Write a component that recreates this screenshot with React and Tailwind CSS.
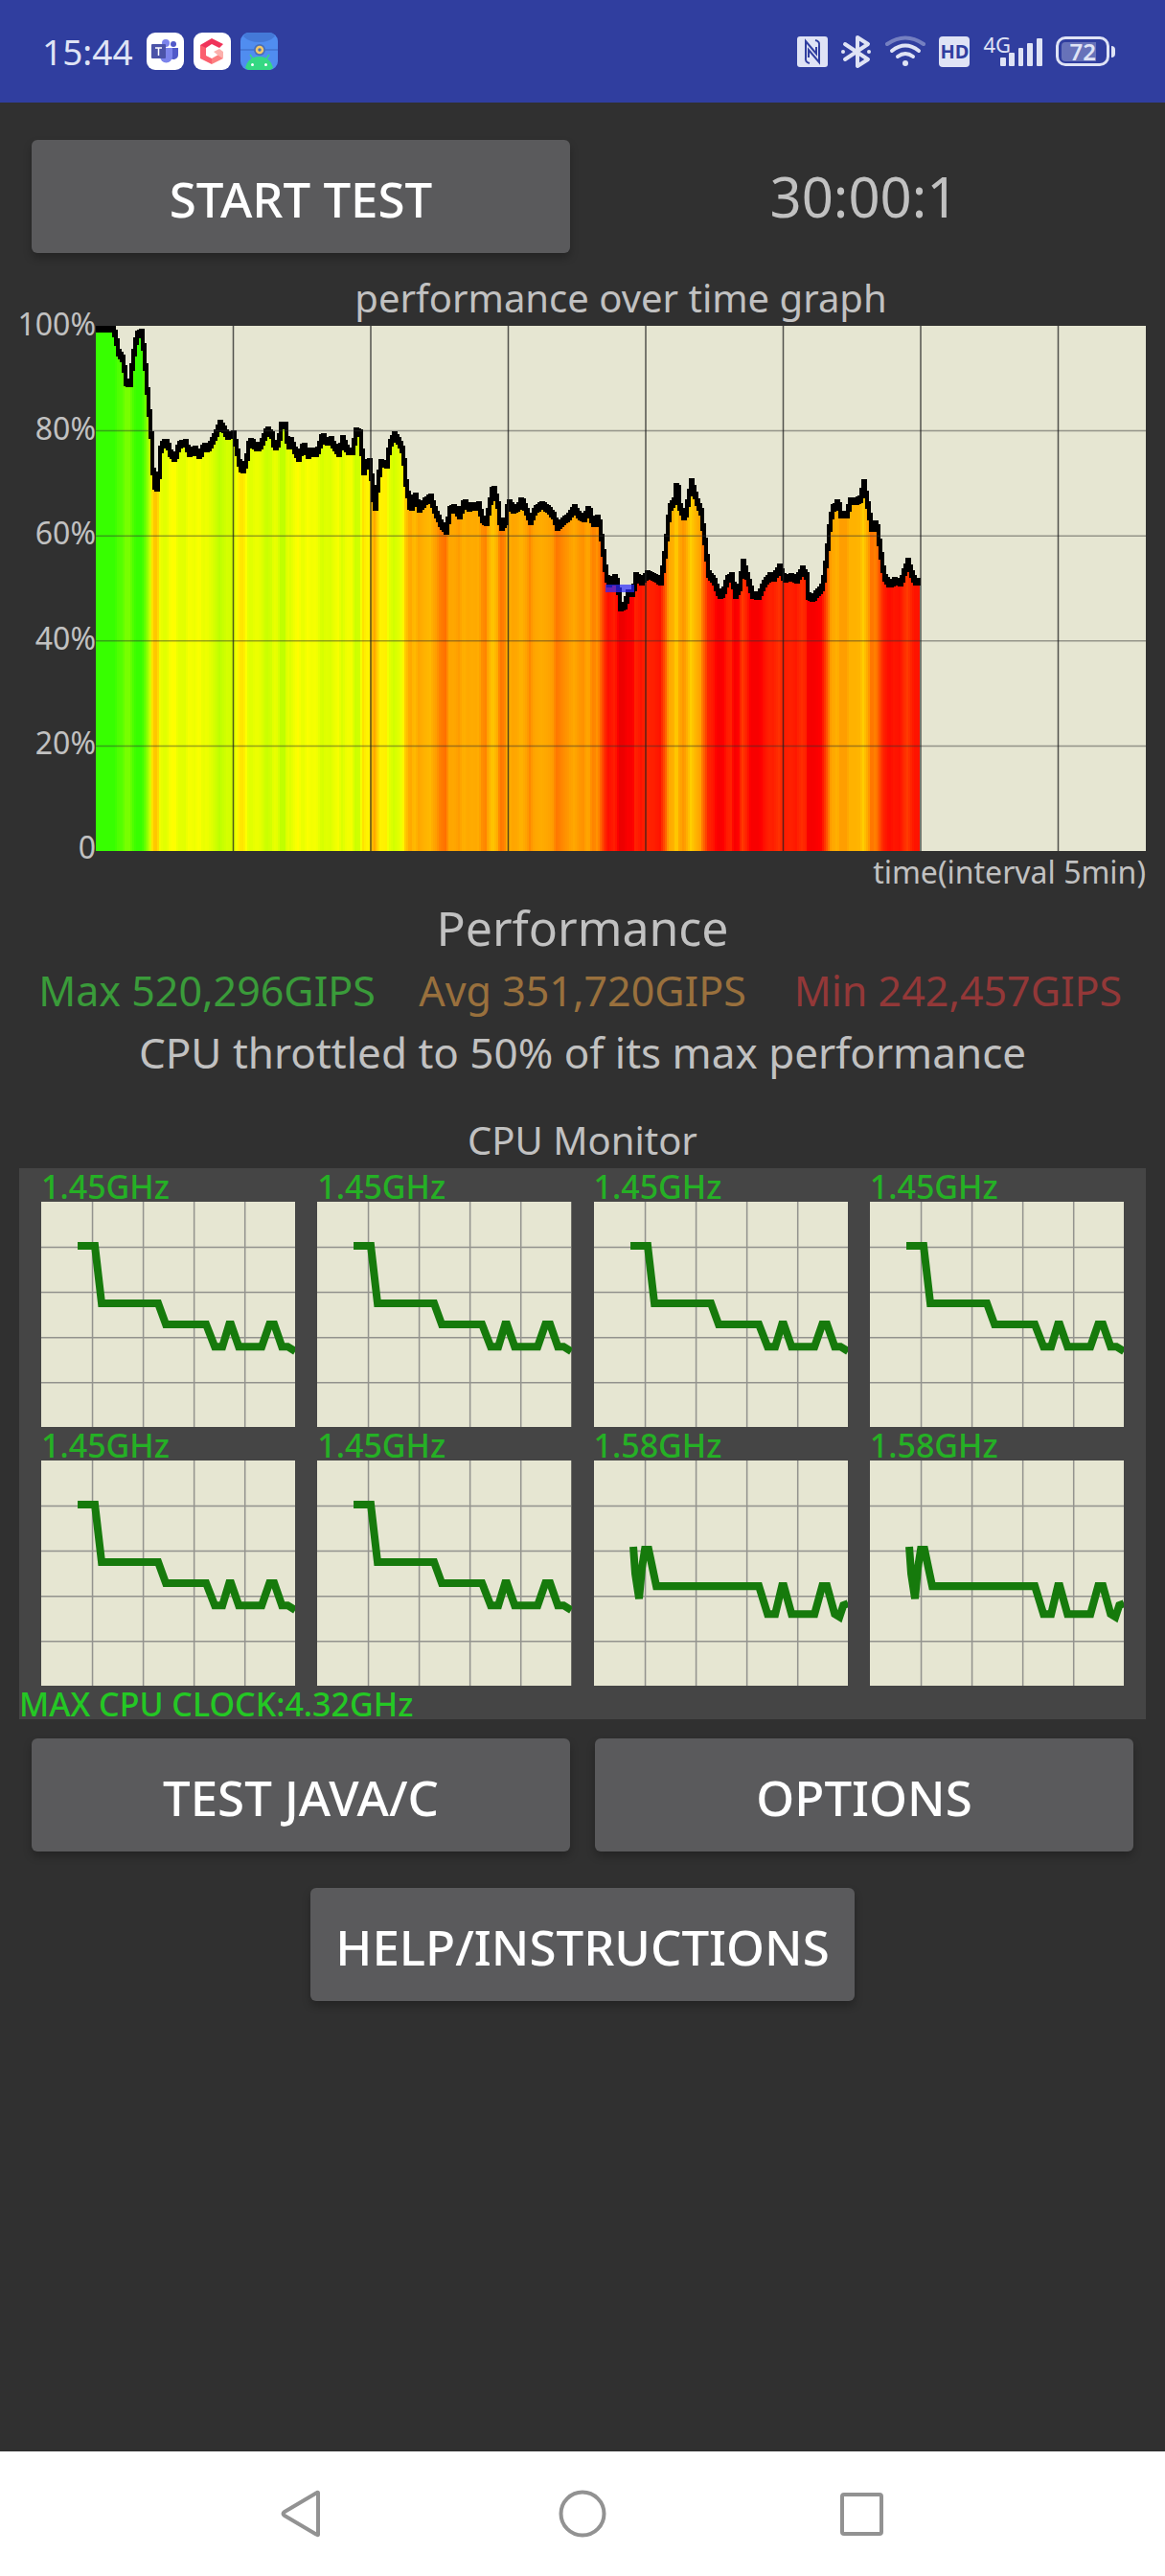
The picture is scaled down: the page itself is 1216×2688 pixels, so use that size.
import React from 'react';

// performance trace, [x, y] in plot units (y grows downwards, 548 = 0%)
const PLOT_W = 1096;
const PLOT_H = 548;
const TRACE = [
  [0, 3], [18, 3], [22, 22], [24, 34], [26, 28], [29, 45], [31, 59], [35, 60],
  [37, 43], [40, 20], [43, 9], [47, 7], [50, 30], [53, 68], [57, 114],
  [59, 152], [62, 175], [65, 156], [67, 129], [70, 122], [74, 122], [77, 133],
  [82, 139], [86, 124], [93, 122], [97, 133], [103, 129], [108, 136],
  [112, 125], [116, 129], [120, 122], [124, 114], [129, 102], [134, 110],
  [137, 115], [143, 113], [146, 126], [149, 143], [152, 152], [156, 143],
  [159, 124], [162, 120], [166, 127], [170, 127], [173, 121], [178, 108],
  [183, 114], [186, 127], [190, 122], [193, 104], [197, 104], [200, 127],
  [203, 120], [207, 130], [211, 138], [216, 124], [221, 135], [225, 131],
  [230, 133], [233, 124], [236, 114], [240, 122], [245, 119], [248, 126],
  [253, 133], [257, 118], [262, 131], [267, 131], [271, 110], [275, 112],
  [279, 152], [282, 143], [286, 141], [288, 175], [291, 189], [294, 160],
  [297, 143], [303, 145], [306, 124], [311, 114], [316, 122], [320, 131],
  [323, 164], [328, 194], [332, 175], [337, 191], [343, 183], [349, 179],
  [353, 192], [359, 206], [365, 214], [369, 192], [374, 190], [379, 198],
  [384, 183], [388, 190], [394, 187], [396, 190], [399, 187], [403, 202],
  [407, 205], [411, 183], [414, 167], [419, 187], [422, 212], [427, 204],
  [430, 183], [435, 192], [440, 190], [444, 181], [448, 191], [453, 204],
  [458, 192], [465, 187], [472, 192], [477, 198], [481, 210], [487, 204],
  [493, 199], [499, 190], [504, 199], [509, 201], [514, 190], [518, 206],
  [522, 204], [524, 198], [528, 229], [532, 261], [535, 269], [541, 263],
  [544, 269], [547, 294], [551, 292], [555, 279], [560, 279], [563, 261],
  [569, 267], [575, 259], [583, 263], [589, 267], [592, 248], [595, 221],
  [598, 191], [603, 183], [605, 168], [607, 170], [609, 189], [614, 202],
  [618, 179], [621, 163], [626, 181], [631, 194], [635, 225], [639, 259],
  [645, 267], [650, 281], [654, 279], [658, 265], [663, 261], [667, 281],
  [671, 273], [675, 247], [680, 265], [685, 281], [691, 282], [697, 269],
  [703, 261], [707, 263], [713, 252], [718, 264], [725, 262], [731, 265],
  [737, 254], [741, 261], [743, 282], [748, 284], [753, 278], [758, 272],
  [762, 241], [765, 211], [768, 191], [771, 189], [774, 183], [777, 197],
  [783, 197], [787, 183], [792, 183], [797, 181], [801, 164], [805, 187],
  [809, 211], [812, 211], [814, 203], [818, 233], [822, 261], [828, 270],
  [833, 266], [840, 268], [843, 257], [847, 246], [851, 259], [854, 267],
  [860, 267],
];

// performance % -> hue
const HUES = [
  [0, 0], [50, 0], [52, 7], [62, 29], [64, 37], [71, 50], [75, 60], [77, 65],
  [82, 77], [88, 90], [98, 107], [100, 107],
];

function lerp(table, x) {
  for (let i = 1; i < table.length; i++) {
    const [x0, y0] = table[i - 1];
    const [x1, y1] = table[i];
    if (x <= x1) return y0 + ((y1 - y0) * (x - x0)) / (x1 - x0);
  }
  return table[table.length - 1][1];
}

const BARS = Array.from({ length: 430 }, (_, i) => {
  const x = i * 2;
  const y = lerp(TRACE, x + 1);
  const prev = lerp(TRACE, Math.max(x - 1, 0));
  const pct = 100 - (y / PLOT_H) * 100;
  const light = pct < 50 ? 50 - (50 - pct) : 50;
  const top = Math.max(Math.min(y, prev) - 4, 0);
  return {
    x,
    y,
    top,
    line: Math.max(y, prev) + 4 - top,
    fill: `hsl(${lerp(HUES, pct)} 100% ${light}%)`,
  };
});

const LITTLE =
  'M38 46H56L63 106H122L130 128H172L181 151H189L196 128H198L206 151H230L238 128H243L251 151H257L265 156';
const BIG =
  'M41 90L43 118L47 144L50 112L53 93H57L65 131H172L181 160H189L196 131H198L206 160H230L238 131H243L251 160L256 163L260 151L265 149';

const CORES = [
  { clock: '1.45GHz', path: LITTLE },
  { clock: '1.45GHz', path: LITTLE },
  { clock: '1.45GHz', path: LITTLE },
  { clock: '1.45GHz', path: LITTLE },
  { clock: '1.45GHz', path: LITTLE },
  { clock: '1.45GHz', path: LITTLE },
  { clock: '1.58GHz', path: BIG },
  { clock: '1.58GHz', path: BIG },
];

function TeamsIcon() {
  return (
    <svg width="39" height="39" viewBox="0 0 39 39">
      <rect width="39" height="39" rx="9" fill="#fff" />
      <circle cx="28" cy="12" r="3" fill="#5059c9" />
      <path d="M24 16h9v7a5 5 0 0 1-9 3z" fill="#5059c9" />
      <circle cx="20" cy="11" r="4" fill="#7b83eb" />
      <path d="M14 16h13v9a6.500 6.500 0 0 1-13 0z" fill="#7b83eb" />
      <rect x="5" y="12" width="15" height="15" rx="1" fill="#4b53a8" />
      <path d="M9 16h7M12.500 16v8" stroke="#fff" strokeWidth="1.500" />
    </svg>
  );
}

function HexIcon() {
  return (
    <svg width="39" height="39" viewBox="0 0 39 39">
      <rect width="39" height="39" rx="9" fill="#fff" />
      <path d="M7 13L19 6L31 12L27 16L19 12L13 16V18L7 14z" fill="#f0335a" />
      <path d="M7 13L13 16V24L19 27V33L7 27z" fill="#fb5f6e" />
      <path d="M19 27L26 23L31 27L19 33z" fill="#fc7f80" />
      <path d="M21 20L27 17L31 20V27L26 24z" fill="#fbb0ac" />
    </svg>
  );
}

function DroidIcon() {
  return (
    <svg width="39" height="39" viewBox="0 0 39 39">
      <rect width="39" height="39" rx="9" fill="#508df0" />
      <path d="M3 4Q5 0 9 0H30Q34 0 36 4Q30 10 19.500 10T3 4z" fill="#4479d8" />
      <path d="M0 18H39" stroke="#4479d8" strokeWidth="2" />
      <circle cx="20" cy="18" r="6" fill="#4a6fb5" />
      <circle cx="20" cy="18" r="3" fill="none" stroke="#f3c969" strokeWidth="2.500" />
      <path d="M10 23L14 29M30 23L26 29" stroke="#35d883" strokeWidth="1.500" />
      <path d="M5 37Q8 25 19.500 25T34 37L31 39H8z" fill="#35d883" />
      <circle cx="12.500" cy="33.500" r="1.500" fill="#fff" />
      <circle cx="26.500" cy="33.500" r="1.500" fill="#fff" />
    </svg>
  );
}

function StatusBar() {
  return (
    <header className="flex h-[107px] items-center justify-between bg-[#303e9f] pr-[52px] pl-[44px] text-[#dfe3f5]">
      <div className="flex items-center gap-[10px]">
        <span className="pr-1 text-[37px] leading-10">15:44</span>
        <TeamsIcon />
        <HexIcon />
        <DroidIcon />
      </div>
      <div className="flex items-center gap-[14px]">
        <svg width="32" height="32" viewBox="0 0 32 32">
          <rect width="32" height="32" rx="3" fill="#dfe3f5" />
          <path
            d="M13 28Q8 27 9 22V5L20 18V11M19 4Q24 5 23 10V27L12 14V22"
            fill="none"
            stroke="#303e9f"
            strokeWidth="2"
          />
        </svg>
        <svg width="32" height="36" viewBox="0 0 32 36">
          <path
            d="M4 10L28 26L17 33V3L28 10L4 26"
            fill="none"
            stroke="#dfe3f5"
            strokeWidth="4"
            strokeLinecap="round"
            strokeLinejoin="round"
          />
          <circle cx="2" cy="18" r="2" fill="#dfe3f5" />
          <circle cx="29" cy="18" r="2" fill="#dfe3f5" />
        </svg>
        <svg width="42" height="34" viewBox="0 0 42 34" fill="none" stroke="#dfe3f5" strokeWidth="4" strokeLinecap="round">
          <path d="M2 9Q21 -4 40 9" opacity="0.400" />
          <path d="M7 16Q21 5 35 16" />
          <path d="M13 22Q21 16 29 22" />
          <circle cx="21" cy="29" r="3" fill="#dfe3f5" stroke="none" />
        </svg>
        <span className="flex h-8 w-8 items-center justify-center rounded bg-[#dfe3f5] text-[20px] leading-8 font-bold text-[#303e9f]">
          HD
        </span>
        <div className="flex items-end">
          <span className="self-start text-[22px] leading-4">4G</span>
          <svg className="-ml-3" width="45" height="32" viewBox="0 0 45 32" fill="#dfe3f5">
            <rect x="1" y="22" width="6" height="9" rx="1" />
            <rect x="10" y="17" width="6" height="14" rx="1" />
            <rect x="20" y="12" width="5" height="19" rx="1" />
            <rect x="29" y="7" width="6" height="24" rx="1" />
            <rect x="39" y="2" width="6" height="29" rx="1" />
          </svg>
        </div>
        <div className="flex items-center gap-[2px]">
          <span className="flex h-[31px] w-14 items-center rounded-[10px] border-[3px] border-[#dfe3f5] p-[3px]">
            <span className="flex h-5 w-9 items-center justify-end rounded-l bg-[#6772b9] text-[24px] leading-5 font-semibold">
              72
            </span>
          </span>
          <span className="h-3 w-1 rounded-r bg-[#dfe3f5]" />
        </div>
      </div>
    </header>
  );
}

function ActionButton({ children }) {
  return (
    <button
      type="button"
      className="h-[118px] rounded-md bg-[#5a5a5c] px-[26px] pt-1 text-[51px] leading-[64px] font-medium text-white shadow-[0_5px_8px_rgba(0,0,0,0.25)]"
    >
      {children}
    </button>
  );
}

function PerformanceGraph() {
  return (
    <section>
      <h2 className="mt-[23px] mb-[5px] pl-20 text-center text-[40px] leading-[48px]">
        performance over time graph
      </h2>
      <div className="flex">
        <div className="-mt-[22px] -mb-4 flex w-20 shrink-0 flex-col items-end justify-between text-[32px] leading-10">
          <span>100%</span>
          <span>80%</span>
          <span>60%</span>
          <span>40%</span>
          <span>20%</span>
          <span>0</span>
        </div>
        <svg className="h-auto min-w-0 flex-1" viewBox={`0 0 ${PLOT_W} ${PLOT_H}`}>
          <rect width={PLOT_W} height={PLOT_H} fill="#e6e6d2" />
          <g shapeRendering="crispEdges">
            {BARS.map((b) => (
              <rect key={b.x} x={b.x} y={b.y} width="2" height={PLOT_H - b.y} fill={b.fill} />
            ))}
            {BARS.map((b) => (
              <rect key={b.x} x={b.x - 1} y={b.top} width="4" height={b.line} fill="#000" />
            ))}
          </g>
          <path d="M532 274H562" stroke="#2a2aff" strokeWidth="8" opacity="0.700" />
          {[1, 2, 3, 4].map((i) => (
            <path key={i} d={`M0 ${i * 109.6}H${PLOT_W}`} stroke="#303030" strokeOpacity="0.450" strokeWidth="1.500" />
          ))}
          {[1, 2, 3, 4, 5, 6, 7].map((i) => (
            <path key={i} d={`M${i * 143.5} 0V${PLOT_H}`} stroke="#202020" strokeOpacity="0.750" strokeWidth="1.500" />
          ))}
        </svg>
      </div>
      <p className="pt-[2px] text-right text-[32px] leading-10">time(interval 5min)</p>
    </section>
  );
}

function CoreChart({ clock, path }) {
  return (
    <div>
      <p className="pt-1 text-[34px] leading-[31px] font-medium text-[#25b025]">{clock}</p>
      <svg className="block h-auto w-full" viewBox="0 0 265 235">
        <rect width="265" height="235" fill="#e6e6d2" />
        <path
          d="M53.500 0V235M106.500 0V235M159.500 0V235M212.500 0V235M0 47.500H265M0 94.500H265M0 141.500H265M0 188.500H265"
          stroke="#777"
          strokeOpacity="0.750"
          strokeWidth="1.500"
        />
        <path d={path} fill="none" stroke="#167a0c" strokeWidth="8" strokeMiterlimit="2" />
      </svg>
    </div>
  );
}

function CpuMonitor() {
  return (
    <section>
      <h2 className="mt-[38px] mb-[5px] text-center text-[40px] leading-[48px]">CPU Monitor</h2>
      <div className="bg-[#454545]">
        <div className="grid grid-cols-4 gap-x-[23px] px-[23px]">
          {CORES.map((core, i) => (
            <CoreChart key={i} {...core} />
          ))}
        </div>
        <p className="pt-1 text-[34px] leading-[31px] font-medium text-[#24c824]">
          MAX CPU CLOCK:4.32GHz
        </p>
      </div>
    </section>
  );
}

function NavBar() {
  return (
    <nav className="mt-auto grid h-[130px] grid-cols-3 place-items-center bg-white px-[14%]">
      <button type="button" aria-label="Back">
        <svg width="50" height="50" viewBox="0 0 50 50" fill="none" stroke="#929292" strokeWidth="4" strokeLinejoin="round">
          <path d="M41 3.500V46.500Q41 48 39 46.500L6 27Q3 25 6 23L39 3.500Q41 2 41 3.500z" />
        </svg>
      </button>
      <button type="button" aria-label="Home">
        <svg width="50" height="50" viewBox="0 0 50 50" fill="none" stroke="#929292" strokeWidth="4">
          <circle cx="25" cy="25" r="22.500" />
        </svg>
      </button>
      <button type="button" aria-label="Recent apps">
        <svg width="50" height="50" viewBox="0 0 50 50" fill="none" stroke="#929292" strokeWidth="4">
          <rect x="4" y="5" width="41" height="41" rx="2" />
        </svg>
      </button>
    </nav>
  );
}

export default function App() {
  return (
    <div className="flex min-h-screen flex-col bg-[#303030] font-['Noto_Sans',sans-serif] text-[#c1c1c1]">
      <StatusBar />
      <main className="px-5 pt-[39px]">
        <div className="grid grid-cols-2 items-center gap-[26px] px-[13px]">
          <ActionButton>START TEST</ActionButton>
          <p className="text-center text-[58px] leading-[64px]">30:00:1</p>
        </div>

        <PerformanceGraph />

        <section className="text-center">
          <h2 className="mt-[6px] text-[50px] leading-[64px]">Performance</h2>
          <div className="mt-1 grid grid-cols-3 text-[43px] leading-[60px]">
            <span className="text-[#3a9b3a]">Max 520,296GIPS</span>
            <span className="text-[#99703d]">Avg 351,720GIPS</span>
            <span className="text-[#933838]">Min 242,457GIPS</span>
          </div>
          <p className="mt-1 text-[44px] leading-[60px]">
            CPU throttled to 50% of its max performance
          </p>
        </section>

        <CpuMonitor />

        <div className="mt-5 grid grid-cols-2 gap-[26px] px-[13px]">
          <ActionButton>TEST JAVA/C</ActionButton>
          <ActionButton>OPTIONS</ActionButton>
        </div>
        <div className="mt-[38px] mb-10 flex justify-center">
          <ActionButton>HELP/INSTRUCTIONS</ActionButton>
        </div>
      </main>
      <NavBar />
    </div>
  );
}
